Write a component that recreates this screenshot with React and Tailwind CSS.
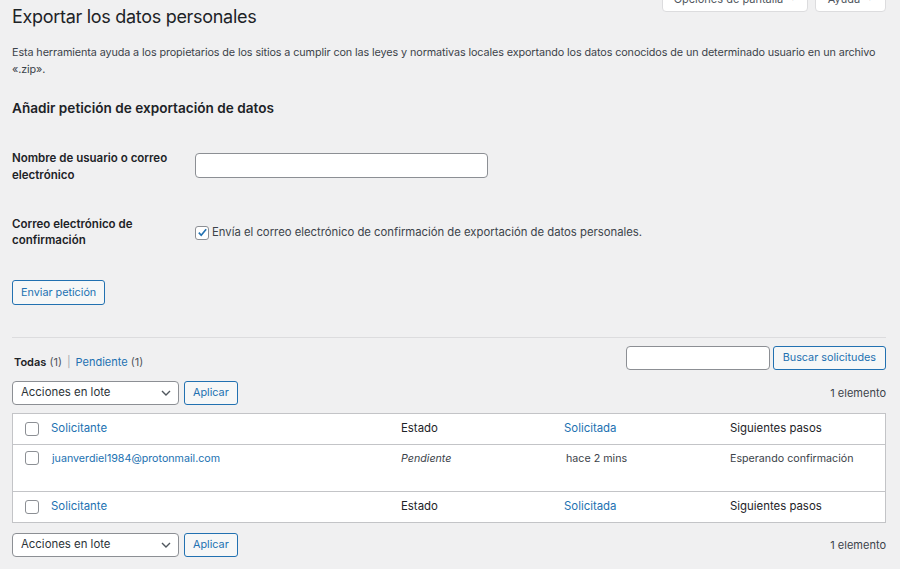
const font = { fontFamily: 'Inter, "Noto Sans", sans-serif' }

function Chevron() {
    return (
        <svg width="10" height="6" viewBox="0 0 10 6" className="shrink-0">
            <path d="M1 1l4 4 4-4" fill="none" stroke="#50575e" strokeWidth="1.4" />
        </svg>
    )
}

function Checkbox({ checked }) {
    return (
        <span className="flex h-[14px] w-[14px] items-center justify-center rounded-[3px] border border-[#8c8f94] bg-white">
            {checked && (
                <svg width="11" height="11" viewBox="0 0 12 12">
                    <path d="M2 6.2l2.6 2.8L10 2.5" fill="none" stroke="#2271b1" strokeWidth="1.8" />
                </svg>
            )}
        </span>
    )
}

function BulkActions() {
    return (
        <div className="flex items-center gap-[5px]">
            <div className="flex h-[24px] w-[167px] items-center justify-between rounded-[4px] border border-[#8c8f94] bg-white pl-[8px] pr-[7px] text-[11.4px] text-[#2c3338]">
                <span>Acciones en lote</span>
                <Chevron />
            </div>
            <button className="h-[24px] rounded-[3px] border border-[#2271b1] bg-[#f6f7f7] px-[8px] text-[10.8px] text-[#2271b1]">
                Aplicar
            </button>
        </div>
    )
}

function HeaderRow() {
    return (
        <div className="grid h-[30px] grid-cols-[30px_350px_163px_166px_1fr] items-center text-[11.4px] text-[#1d2327]">
            <div className="flex justify-end pr-[4px]">
                <Checkbox />
            </div>
            <div className="px-[8px] text-[#2271b1]">Solicitante</div>
            <div className="px-[8px]">Estado</div>
            <div className="px-[8px] text-[#2271b1]">Solicitada</div>
            <div className="px-[8px]">Siguientes pasos</div>
        </div>
    )
}

export default function App() {
    return (
        <div style={font} className="min-h-[569px] bg-[#f0f0f1] pl-[12px] pr-[14px] text-[#3c434a]">
            <div className="flex items-start justify-between">
                <h1 className="pt-[5px] text-[18px] font-normal leading-[24px] tracking-[-0.3px] text-[#1d2327]">
                    Exportar los datos personales
                </h1>
                <div className="-mt-[14px] flex gap-[7px] text-[11px] text-[#50575e]">
                    <div className="flex h-[26px] w-[146px] items-center justify-center gap-[6px] rounded-b-[4px] border border-[#dcdcde] bg-white">
                        Opciones de pantalla <span className="text-[7px]">▼</span>
                    </div>
                    <div className="flex h-[26px] w-[71px] items-center justify-center gap-[6px] rounded-b-[4px] border border-[#dcdcde] bg-white">
                        Ayuda <span className="text-[7px]">▼</span>
                    </div>
                </div>
            </div>

            <p className="mt-[15px] text-[10.8px] leading-[17px] tracking-[-0.1px]">
                Esta herramienta ayuda a los propietarios de los sitios a cumplir con las leyes y normativas locales exportando los datos conocidos de un determinado usuario en un archivo «.zip».
            </p>

            <h2 className="mt-[20px] text-[13.6px] font-semibold text-[#1d2327]">
                Añadir petición de exportación de datos
            </h2>

            <div className="mt-[35px] grid grid-cols-[183px_1fr] text-[#1d2327]">
                <label className="-mt-[3px] text-[11.5px] font-semibold leading-[17px]">
                    Nombre de usuario o correo electrónico
                </label>
                <div>
                    <div className="h-[25px] w-[293px] rounded-[4px] border border-[#8c8f94] bg-white" />
                </div>
                <label className="mt-[32px] text-[11.5px] font-semibold leading-[16px]">
                    Correo electrónico de confirmación
                </label>
                <div className="mt-[33px] flex items-center gap-[3px] text-[11.3px] text-[#3c434a]">
                    <Checkbox checked />
                    <span>Envía el correo electrónico de confirmación de exportación de datos personales.</span>
                </div>
            </div>

            <button className="mt-[32px] h-[25px] rounded-[3px] border border-[#2271b1] bg-[#f6f7f7] px-[8px] text-[10.8px] text-[#2271b1]">
                Enviar petición
            </button>

            <div className="mt-[32px] border-t border-[#dcdcde]" />

            <div className="mt-[7px] flex items-center justify-between">
                <div className="mt-[9px] flex items-center gap-[5px] pl-[2px] text-[11px]">
                    <span>
                        <span className="font-semibold text-[#1d2327]">Todas</span> <span className="text-[#50575e]">(1)</span>
                    </span>
                    <span className="text-[#a7aaad]">|</span>
                    <span className="text-[#2271b1]">
                        Pendiente <span className="text-[#50575e]">(1)</span>
                    </span>
                </div>
                <div className="flex items-center gap-[3px]">
                    <div className="h-[24px] w-[144px] rounded-[4px] border border-[#8c8f94] bg-white" />
                    <button className="h-[24px] rounded-[3px] border border-[#2271b1] bg-[#f6f7f7] px-[9px] text-[10.8px] text-[#2271b1]">
                        Buscar solicitudes
                    </button>
                </div>
            </div>

            <div className="mt-[10px] flex items-center justify-between">
                <BulkActions />
                <span className="text-[11px]">1 elemento</span>
            </div>

            <div className="mt-[8px] border border-[#c3c4c7] bg-white">
                <div className="border-b border-[#c3c4c7]">
                    <HeaderRow />
                </div>
                <div className="grid h-[46px] grid-cols-[30px_350px_163px_166px_1fr] items-start pt-[6px] text-[10.7px]">
                    <div className="flex justify-end pr-[4px]">
                        <Checkbox />
                    </div>
                    <div className="px-[9px] text-[#2271b1]">juanverdiel1984@protonmail.com</div>
                    <div className="px-[8px] italic">Pendiente</div>
                    <div className="px-[10px]">hace 2 mins</div>
                    <div className="px-[8px]">Esperando confirmación</div>
                </div>
                <div className="border-t border-[#c3c4c7]">
                    <HeaderRow />
                </div>
            </div>

            <div className="mt-[10px] flex items-center justify-between">
                <BulkActions />
                <span className="text-[11px]">1 elemento</span>
            </div>
        </div>
    )
}
